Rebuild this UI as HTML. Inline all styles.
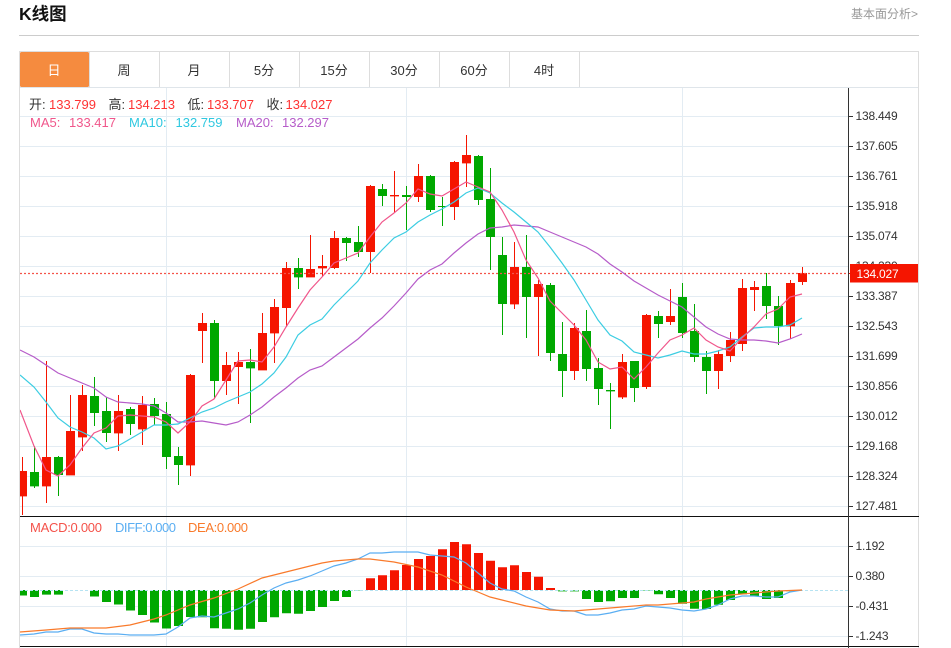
<!DOCTYPE html>
<html lang="zh">
<head>
<meta charset="utf-8">
<title>K线图</title>
<style>
html,body{margin:0;padding:0;background:#fff;width:951px;height:648px;overflow:hidden}
svg{display:block;position:absolute;left:0;top:0}
text{font-family:"Liberation Sans","Noto Sans CJK SC",sans-serif}
</style>
</head>
<body>
<svg width="951" height="648" viewBox="0 0 951 648" xmlns="http://www.w3.org/2000/svg">
<defs><clipPath id="p"><rect x="20" y="88" width="828" height="428"/></clipPath></defs>

<text x="19" y="20" font-size="17.500" font-weight="700" fill="#111">K线图</text>
<text x="851" y="18" font-size="12" fill="#999">基本面分析&gt;</text>
<rect x="19" y="35" width="900" height="1" fill="#ccc"/>

<!-- frame -->
<rect x="19" y="51" width="900" height="1" fill="#ddd"/>
<rect x="19" y="51" width="1" height="597" fill="#ddd"/>
<rect x="918" y="51" width="1" height="597" fill="#ddd"/>
<rect x="20" y="87" width="898" height="1" fill="#dfe5ea"/>

<!-- tabs -->
<rect x="20" y="52" width="69" height="35" rx="1.5" fill="#f58b3f"/>
<path d="M89 52h1v35h-1zM159 52h1v35h-1zM229 52h1v35h-1zM299 52h1v35h-1zM369 52h1v35h-1zM439 52h1v35h-1zM509 52h1v35h-1zM579 52h1v35h-1z" fill="#ddd"/>
<g font-size="13" fill="#333" text-anchor="middle">
<text x="54" y="75" fill="#fff">日</text>
<text x="124" y="75">周</text>
<text x="194" y="75">月</text>
<text x="264" y="75">5分</text>
<text x="334" y="75">15分</text>
<text x="404" y="75">30分</text>
<text x="474" y="75">60分</text>
<text x="544" y="75">4时</text>
</g>

<!-- grid -->
<path d="M20 116.5H848M20 146.5H848M20 176.5H848M20 206.5H848M20 236.5H848M20 266.5H848M20 296.5H848M20 326.5H848M20 356.5H848M20 386.5H848M20 416.5H848M20 446.5H848M20 476.5H848M20 506.5H848M20 546.5H848M20 576.5H848M20 606.5H848M20 636.5H848M166.5 88V646M406.5 88V646M682.5 88V646" stroke="#e3ecf3" stroke-width="1" fill="none"/>

<g clip-path="url(#p)">
<!-- red candles -->
<path fill="#f51500" d="M22 457h1V515h-1zM18 471h9V496.4h-9zM46 361h1V503h-1zM42 457h9V486.4h-9zM70 395h1V475h-1zM66 431h9V475.4h-9zM82 385h1V451h-1zM78 395h9V437.4h-9zM118 395h1V451h-1zM114 411h9V433.4h-9zM142 396h1V445h-1zM138 405h9V429.4h-9zM190 374h1V476h-1zM186 375h9V465.4h-9zM202 313h1V363h-1zM198 323h9V331h-9zM226 352h1V395h-1zM222 365h9V381h-9zM238 352h1V404h-1zM234 362h9V367h-9zM262 313h1V370h-1zM258 333h9V370.4h-9zM274 299h1V363h-1zM270 307h9V333.4h-9zM286 262h1V327h-1zM282 268h9V308h-9zM310 235h1V277h-1zM306 269h9V277.4h-9zM322 255h1V277h-1zM318 266h9V268.4h-9zM334 231h1V269h-1zM330 238h9V268h-9zM370 185h1V273h-1zM366 186h9V252h-9zM394 171h1V213h-1zM390 195h9V196.4h-9zM418 164h1V202h-1zM414 176h9V197h-9zM454 161h1V220h-1zM450 162h9V207h-9zM466 135h1V187h-1zM462 155h9V163.4h-9zM514 242h1V309h-1zM510 267h9V304.4h-9zM538 280h1V356h-1zM534 284h9V297h-9zM574 323h1V380h-1zM570 328h9V371h-9zM622 354h1V399h-1zM618 362h9V397.4h-9zM646 314h1V389h-1zM642 315h9V387h-9zM670 289h1V325h-1zM666 316h9V322h-9zM718 350h1V389h-1zM714 354h9V371h-9zM730 332h1V362h-1zM726 340h9V356h-9zM742 279h1V351h-1zM738 288h9V344h-9zM754 281h1V311h-1zM750 287h9V290h-9zM790 280h1V339h-1zM786 283h9V326.4h-9zM802 267h1V285h-1zM798 273h9V282h-9z"/>
<!-- green candles -->
<path fill="#00a800" d="M34 446h1V488h-1zM30 472h9V486.4h-9zM58 456h1V496h-1zM54 457h9V475h-9zM94 377h1V426h-1zM90 396h9V413h-9zM106 397h1V442h-1zM102 411h9V433h-9zM130 407h1V435h-1zM126 409h9V424h-9zM154 398h1V425h-1zM150 404h9V416h-9zM166 402h1V469h-1zM162 414h9V457h-9zM178 447h1V485h-1zM174 456h9V465h-9zM214 320h1V399h-1zM210 323h9V381h-9zM250 349h1V423h-1zM246 362h9V368.4h-9zM298 258h1V289h-1zM294 268h9V277.4h-9zM346 237h1V261h-1zM342 238h9V243h-9zM358 226h1V257h-1zM354 242h9V252h-9zM382 184h1V206h-1zM378 189h9V196h-9zM406 186h1V230h-1zM402 195h9V197h-9zM430 175h1V212h-1zM426 176h9V210h-9zM442 197h1V226h-1zM438 206h9V207h-9zM478 155h1V205h-1zM474 156h9V200h-9zM490 168h1V270h-1zM486 199h9V237h-9zM502 237h1V335h-1zM498 255h9V304h-9zM526 235h1V338h-1zM522 267h9V297h-9zM550 283h1V361h-1zM546 285h9V353h-9zM562 322h1V397h-1zM558 354h9V371h-9zM586 310h1V381h-1zM582 331h9V369h-9zM598 358h1V405h-1zM594 368h9V389h-9zM610 383h1V429h-1zM606 390h9V391.4h-9zM634 361h1V402h-1zM630 361h9V388h-9zM658 311h1V338h-1zM654 316h9V324h-9zM682 283h1V338h-1zM678 297h9V333h-9zM694 304h1V362h-1zM690 331h9V357h-9zM706 351h1V394h-1zM702 357h9V371h-9zM766 273h1V319h-1zM762 286h9V306h-9zM778 296h1V345h-1zM774 306h9V326h-9z"/>
<!-- close price line -->
<path d="M20 273.5H848" stroke="#f4544a" stroke-width="1.300" stroke-dasharray="2 2" fill="none"/>
<!-- MA20 -->
<polyline fill="none" stroke="#b65cc9" stroke-width="1.200" points="20,350 34,357 46,365 58,373 70,378 82,383 94,388 106,397 118,402 130,403 142,404 154,406 166,413 178,422 190,422 202,421 214,423 226,425 238,422 250,415 262,407 274,397 286,388 298,378 310,370 322,366 334,357 346,348 358,339 370,328 382,318 394,306 406,293 418,279 430,270 442,264 454,253 466,243 478,234 490,228 502,227 514,225 526,226 538,227 550,232 562,237 574,242 586,247 598,254 610,264 622,272 634,281 646,288 658,295 670,301 682,307 694,317 706,327 718,334 730,339 742,340 754,340 766,341 778,343 790,339 802,334"/>
<!-- MA10 -->
<polyline fill="none" stroke="#3ccde2" stroke-width="1.200" points="20,375 34,387 46,402 58,418 70,427 82,432 94,438 106,449 118,446 130,439 142,432 154,425 166,425 178,424 190,418 202,412 214,408 226,402 238,397 250,392 262,384 274,373 286,357 298,335 310,325 322,319 334,305 346,293 358,281 370,263 382,250 394,238 406,232 418,222 430,215 442,209 454,202 466,193 478,188 490,193 502,203 514,212 526,222 538,232 550,247 562,263 574,280 586,300 598,320 610,335 622,341 634,352 646,355 658,358 670,355 682,351 694,354 706,354 718,351 730,347 742,337 754,328 766,327 778,327 790,325 802,318"/>
<!-- MA5 -->
<polyline fill="none" stroke="#f0568b" stroke-width="1.200" points="20,410 34,446 46,470 58,476 70,465 82,448 94,433 106,428 118,416 130,415 142,416 154,417 166,422 178,433 190,422 202,406 214,399 226,380 238,361 250,360 262,362 274,347 286,327 298,308 310,290 322,277 334,263 346,258 358,253 370,237 382,222 394,213 406,203 418,189 430,194 442,196 454,189 466,182 478,187 490,192 502,210 514,232 526,260 538,278 550,301 562,313 574,325 586,340 598,362 610,369 622,367 634,379 646,367 658,353 670,340 682,335 694,328 706,340 718,347 730,351 742,338 754,327 766,314 778,309 790,297 802,294"/>
</g>

<!-- legend -->
<g font-size="13">
<text x="29" y="109" fill="#333">开:</text><text x="49" y="109" fill="#f33">133.799</text>
<text x="108.500" y="109" fill="#333">高:</text><text x="128" y="109" fill="#f33">134.213</text>
<text x="187.500" y="109" fill="#333">低:</text><text x="207" y="109" fill="#f33">133.707</text>
<text x="266.500" y="109" fill="#333">收:</text><text x="285.500" y="109" fill="#f33">134.027</text>
<text x="30" y="127" fill="#f0568b">MA5:</text><text x="69" y="127" fill="#f0568b">133.417</text>
<text x="129" y="127" fill="#2fc8e0">MA10:</text><text x="175.500" y="127" fill="#2fc8e0">132.759</text>
<text x="236" y="127" fill="#b65cc9">MA20:</text><text x="282" y="127" fill="#b65cc9">132.297</text>
</g>

<!-- MACD bars -->
<path fill="#00a800" d="M20 590h7v5.500h-7zM30 590h9v7h-9zM42 590h9v4.600h-9zM54 590h9v4.600h-9zM90 590h9v6.500h-9zM102 590h9v12h-9zM114 590h9v14.500h-9zM126 590h9v20.500h-9zM138 590h9v25h-9zM150 590h9v32.500h-9zM162 590h9v38.500h-9zM174 590h9v36h-9zM186 590h9v27h-9zM198 590h9v27.200h-9zM210 590h9v38.300h-9zM222 590h9v38.700h-9zM234 590h9v39.700h-9zM246 590h9v38.700h-9zM258 590h9v32h-9zM270 590h9v27.300h-9zM282 590h9v23.300h-9zM294 590h9v23.700h-9zM306 590h9v21h-9zM318 590h9v17h-9zM330 590h9v11h-9zM342 590h9v7h-9z"/>
<path fill="#00a800" d="M558 590.400h9v1h-9zM570 590.400h9v1h-9zM582 590h9v9h-9zM594 590h9v12h-9zM606 590h9v11.300h-9zM618 590h9v8h-9zM630 590h9v8h-9zM654 590h9v4.300h-9zM666 590h9v8h-9zM678 590h9v13.700h-9zM690 590h9v18.700h-9zM702 590h9v19h-9zM714 590h9v14.700h-9zM726 590h9v10h-9zM738 590h9v4.300h-9zM750 590h9v6h-9zM762 590h9v9h-9zM774 590h9v8h-9z"/>
<path fill="#8fdc9a" d="M354 590h9v.8h-9zM642 590h9v1h-9zM786 590h9v1.500h-9z"/>
<path fill="#f51500" d="M366 578.300h9V590h-9zM378 575.300h9V590h-9zM390 570.300h9V590h-9zM402 565h9V590h-9zM414 559h9V590h-9zM426 556h9V590h-9zM438 549.300h9V590h-9zM450 542h9V590h-9zM462 544.300h9V590h-9zM474 553h9V590h-9zM486 560.700h9V590h-9zM498 567.300h9V590h-9zM510 565.300h9V590h-9zM522 572h9V590h-9zM534 576.700h9V590h-9zM546 588h9V590h-9z"/>
<path d="M20 590.500H848" stroke="#b6e3f2" stroke-width="1" stroke-dasharray="3 2" fill="none"/>
<!-- DEA / DIFF -->
<polyline fill="none" stroke="#5aaef2" stroke-width="1.200" points="20,635 34,634 46,632 58,632 70,629 82,629 94,633 106,634 118,634 130,635 142,635 154,635 166,634 178,627 190,618 202,616 214,617 226,613 238,609 250,603 262,595 274,588 286,583 298,580 310,576 322,571 334,566 346,563 358,559 370,553 382,553 394,552 406,552 418,552 430,555 442,556 454,557 466,563 478,573 490,583 502,589 514,591 526,597 538,602 550,609 562,611 574,611 586,615 598,615 610,613 622,610 634,609 646,606 658,607 670,608 682,610 694,611 706,609 718,605 730,599 742,596 754,596 766,597 778,597 790,592 802,590"/>
<polyline fill="none" stroke="#f97a2b" stroke-width="1.200" points="20,632 46,630 70,628 94,628 106,628 130,625 154,619 166,615 190,605 214,598 238,589 262,578 286,572 310,566 322,563 334,561 358,559 370,559 394,562 418,567 442,575 454,581 466,587 478,592 490,597 502,600 526,606 550,610 574,611 598,609 622,607 646,605 658,605 682,603 694,602 706,599 730,595 754,593 778,591 802,590"/>

<g font-size="13">
<text x="30" y="532" fill="#f4524a" textLength="72">MACD:0.000</text>
<text x="115" y="532" fill="#5aaef2" textLength="61">DIFF:0.000</text>
<text x="188" y="532" fill="#f97a2b" textLength="60">DEA:0.000</text>
</g>

<!-- axes -->
<rect x="20" y="516" width="899" height="1" fill="#111"/>
<rect x="20" y="646" width="899" height="1" fill="#111"/>
<rect x="848" y="88" width="1" height="560" fill="#333"/>
<path d="M849 116.500h4M849 146.500h4M849 176.500h4M849 206.500h4M849 236.500h4M849 296.500h4M849 326.500h4M849 356.500h4M849 386.500h4M849 416.500h4M849 446.500h4M849 476.500h4M849 506.500h4M849 546.500h4M849 576.500h4M849 606.500h4M849 636.500h4" stroke="#333" stroke-width="1" fill="none"/>
<g font-size="12" fill="#333" letter-spacing="-.2">
<text x="855.500" y="120">138.449</text>
<text x="855.500" y="150">137.605</text>
<text x="855.500" y="180">136.761</text>
<text x="855.500" y="210">135.918</text>
<text x="855.500" y="240">135.074</text>
<text x="855.500" y="270">134.230</text>
<text x="855.500" y="300">133.387</text>
<text x="855.500" y="330">132.543</text>
<text x="855.500" y="360">131.699</text>
<text x="855.500" y="390">130.856</text>
<text x="855.500" y="420">130.012</text>
<text x="855.500" y="450">129.168</text>
<text x="855.500" y="480">128.324</text>
<text x="855.500" y="510">127.481</text>
<text x="855.500" y="550">1.192</text>
<text x="855.500" y="580">0.380</text>
<text x="855.500" y="610">-0.431</text>
<text x="855.500" y="640">-1.243</text>
</g>
<rect x="850" y="264" width="68" height="18.500" fill="#f51500"/>
<path d="M849 273.500h4" stroke="#f51500" fill="none"/>
<text x="856.500" y="278" font-size="12" fill="#fff" letter-spacing="-.2">134.027</text>
</svg>
</body>
</html>
